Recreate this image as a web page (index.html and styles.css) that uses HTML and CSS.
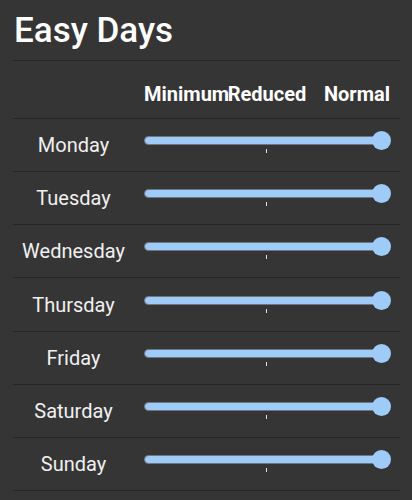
FILE: index.html
```html
<!DOCTYPE html>
<html>
<head>
<meta charset="utf-8">
<link rel="stylesheet" href="styles.css">
</head>
<body>
<div class="page">
  <h1 class="title">Easy Days</h1>
  <div class="row header">
    <div></div>
    <div class="levels">
      <span class="lv-min">Minimum</span>
      <span class="lv-red">Reduced</span>
      <span class="lv-norm">Normal</span>
    </div>
  </div>
  <div class="row"><div class="day">Monday</div><div class="slider"><div class="track"></div><div class="tick"></div><div class="thumb"></div></div></div>
  <div class="row"><div class="day">Tuesday</div><div class="slider"><div class="track"></div><div class="tick"></div><div class="thumb"></div></div></div>
  <div class="row"><div class="day">Wednesday</div><div class="slider"><div class="track"></div><div class="tick"></div><div class="thumb"></div></div></div>
  <div class="row tall"><div class="day">Thursday</div><div class="slider"><div class="track"></div><div class="tick"></div><div class="thumb"></div></div></div>
  <div class="row"><div class="day">Friday</div><div class="slider"><div class="track"></div><div class="tick"></div><div class="thumb"></div></div></div>
  <div class="row"><div class="day">Saturday</div><div class="slider"><div class="track"></div><div class="tick"></div><div class="thumb"></div></div></div>
  <div class="row"><div class="day">Sunday</div><div class="slider"><div class="track"></div><div class="tick"></div><div class="thumb"></div></div></div>
</div>
</body>
</html>
```
FILE: styles.css
```css
html, body {
  margin: 0;
  padding: 0;
  background: #353535;
}
body {
  font-family: Roboto, "Noto Sans", sans-serif;
  color: #f2f2f2;
  height: 500px;
  overflow: hidden;
}
.page {
  margin: 0 12px 0 13px;
}
.title {
  margin: 0;
  padding: 11px 0 9px 1px;
  font-size: 35px;
  line-height: 40px;
  font-weight: 500;
  color: #ffffff;
  border-bottom: 1px solid #262626;
}
.row {
  display: grid;
  grid-template-columns: 121px 1fr;
  column-gap: 10px;
  padding-right: 10px;
  height: 52px;
  align-items: center;
  border-bottom: 1px solid #262626;
}
.row.tall {
  height: 53px;
}
.row.header {
  height: 57px;
  align-items: start;
}
.levels {
  display: grid;
  grid-template-columns: minmax(0, 1fr) auto minmax(0, 1fr);
  padding-top: 22px;
  font-size: 20px;
  line-height: 22px;
  font-weight: 700;
  color: #ffffff;
  white-space: nowrap;
}
.lv-min { justify-self: start; }
.lv-red { justify-self: center; }
.lv-norm { justify-self: end; }
.day {
  text-align: center;
  font-size: 20px;
  line-height: 24px;
  color: #f0f0f0;
}
.slider {
  position: relative;
  height: 22px;
  margin-bottom: 6px;
}
.track {
  position: absolute;
  left: 0;
  right: 0;
  top: 5px;
  height: 9px;
  box-sizing: border-box;
  border-radius: 5px;
  background: #9fcbf9;
  border: 1px solid #6e7680;
}
.thumb {
  position: absolute;
  right: -1px;
  top: 0;
  width: 19px;
  height: 19px;
  border-radius: 50%;
  background: #9fcbf9;
}
.tick {
  position: absolute;
  left: calc(50% - 1px);
  top: 18px;
  width: 1px;
  height: 4px;
  background: #e0e0e0;
}
```
